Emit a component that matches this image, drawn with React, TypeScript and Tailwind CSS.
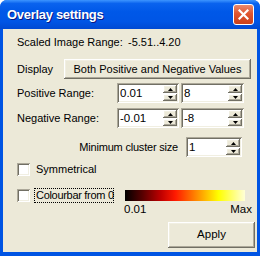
import type { ReactNode } from 'react';

const raised =
  'shadow-[inset_-1px_-1px_0_#716f64,inset_1px_1px_0_#ffffff,inset_-2px_-2px_0_#aca899,inset_2px_2px_0_#f1efe2]';
const sunken =
  'shadow-[inset_1px_1px_0_#aca899,inset_-1px_-1px_0_#ffffff,inset_2px_2px_0_#716f64,inset_-2px_-2px_0_#f1efe2]';

function Arrow({ down }: { down?: boolean }) {
  return (
    <svg width="5" height="3" viewBox="0 0 5 3">
      {down ? <path d="M0 0h5L2.5 3z" fill="#000" /> : <path d="M0 3h5L2.5 0z" fill="#000" />}
    </svg>
  );
}

function Spin({ value, className }: { value: string; className: string }) {
  return (
    <div className={`flex h-[20px] bg-white p-[2px] ${sunken} ${className}`}>
      <div className="flex-1 pl-[1px] text-[11.5px] leading-[16px] text-black">{value}</div>
      <div className="flex w-[14px] flex-col gap-[1px]">
        <div className={`flex h-[8px] items-center justify-center bg-[#ece9d8] ${raised}`}>
          <Arrow />
        </div>
        <div className={`flex h-[7px] items-center justify-center bg-[#ece9d8] ${raised}`}>
          <Arrow down />
        </div>
      </div>
    </div>
  );
}

function Check({ children, focus }: { children: ReactNode; focus?: boolean }) {
  return (
    <div className="flex items-center">
      <span className={`h-[13px] w-[13px] shrink-0 bg-white ${sunken}`} />
      <span
        className={`leading-[13px] whitespace-nowrap ${
          focus ? 'ml-[4px] w-[80px] border border-dotted border-black pl-[1px] tracking-[-0.3px]' : 'ml-[6px]'
        }`}
      >
        {children}
      </span>
    </div>
  );
}

export default function App() {
  return (
    <div className="flex h-[256px] w-[260px] flex-col overflow-hidden rounded-t-[7px] bg-[#0054e3] [font-family:'Liberation_Sans',Arial,sans-serif] text-[11px] text-black">
      <div className="flex h-[29px] items-center bg-[linear-gradient(180deg,#3d95ff_0%,#0a63ee_12%,#0058e8_40%,#0055e5_75%,#0049d2_100%)] pl-[7px] pr-[6px]">
        <span className="flex-1 text-[13px] font-bold tracking-[-0.3px] text-white [text-shadow:1px_1px_0_#0a1883]">
          Overlay settings
        </span>
        <span className="flex h-[21px] w-[21px] items-center justify-center rounded-[3px] border border-white bg-[linear-gradient(180deg,#e88a6e_0%,#e0552f_45%,#c9401c_100%)]">
          <svg width="11" height="11" viewBox="0 0 11 11">
            <path d="M1.5 1.5l8 8M9.5 1.5l-8 8" stroke="#fff" strokeWidth="2.2" strokeLinecap="square" />
          </svg>
        </span>
      </div>

      <div className="mx-[3px] mb-[4px] flex flex-1 flex-col bg-[#ece9d8] pl-[14px]">
        <div className="mt-[6px] flex leading-[14px]">
          <span className="w-[111px]">Scaled Image Range:</span>
          <span>-5.51..4.20</span>
        </div>

        <div className="mt-[10px] flex items-center">
          <span className="w-[47px]">Display</span>
          <button
            type="button"
            className={`h-[20px] w-[187px] bg-[#ece9d8] text-center leading-[20px] ${raised}`}
          >
            Both Positive and Negative Values
          </button>
        </div>

        <div className="mt-[4px] flex items-center">
          <span className="w-[100px]">Positive Range:</span>
          <Spin value="0.01" className="w-[62px]" />
          <Spin value="8" className="ml-[2px] w-[63px]" />
        </div>

        <div className="mt-[5px] flex items-center">
          <span className="w-[100px]">Negative Range:</span>
          <Spin value="-0.01" className="w-[62px]" />
          <Spin value="-8" className="ml-[2px] w-[63px]" />
        </div>

        <div className="mt-[9px] flex items-center justify-end pr-[15px]">
          <span className="mr-[8px] tracking-[-0.2px]">Minimum cluster size</span>
          <Spin value="1" className="w-[56px]" />
        </div>

        <div className="mt-[6px]">
          <Check>Symmetrical</Check>
        </div>

        <div className="mt-[12px] flex items-center">
          <Check focus>Colourbar from 0</Check>
          <div className="ml-[11px] h-[11px] w-[120px] bg-[linear-gradient(90deg,#000000_0%,#5a0000_15%,#c00000_30%,#ff1a00_42%,#ff8000_58%,#ffff00_78%,#ffffd8_100%)]" />
        </div>

        <div className="ml-[107px] flex w-[128px] justify-between text-[11.5px] leading-[13px]">
          <span>0.01</span>
          <span>Max</span>
        </div>

        <div className="mt-[6px] flex justify-end pr-[2px]">
          <button type="button" className={`h-[26px] w-[87px] bg-[#ece9d8] text-center text-[11.5px] ${raised}`}>
            Apply
          </button>
        </div>
      </div>
    </div>
  );
}
